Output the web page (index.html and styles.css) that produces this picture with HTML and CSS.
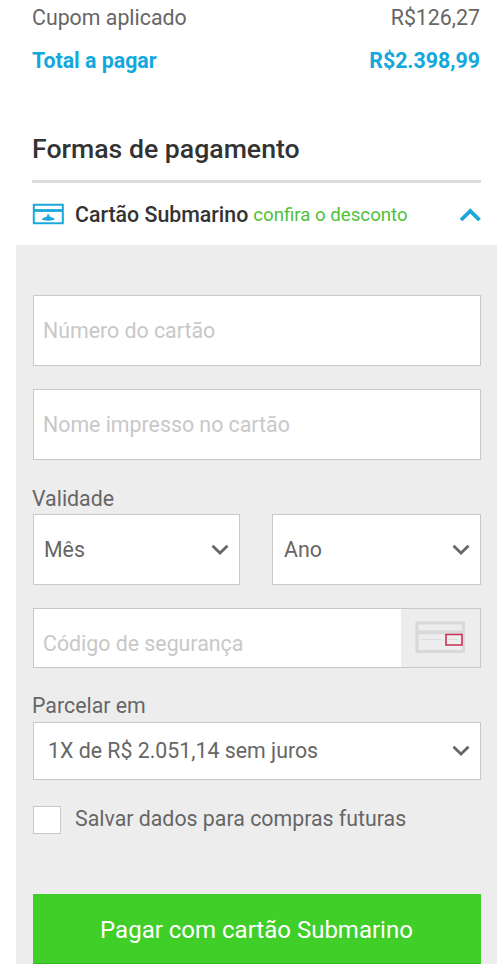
FILE: index.html
```html
<!DOCTYPE html>
<html lang="pt-BR">
<head>
<meta charset="utf-8">
<title>Formas de pagamento</title>
<link rel="stylesheet" href="styles.css">
</head>
<body>
<main class="page">
  <section class="summary">
    <div class="row"><span class="coupon">Cupom aplicado</span><span class="coupon-value">R$126,27</span></div>
    <div class="row total"><span class="total-label">Total a pagar</span><span class="total-value">R$2.398,99</span></div>
  </section>
  <h1 class="title"><span>Formas de pagamento</span></h1>
  <div class="method">
    <svg class="brand" width="32" height="22" viewBox="0 0 32 22" fill="none" stroke="#1ba8d9" stroke-width="2">
      <path d="M1.800 1.800h29v18.400h-29z"/><path d="M1.500 7.500h29.500" stroke-width="2.8"/>
      <path d="M10 16.600c0-1.300 1.800-2.100 4-2.300v-.800h1.200v-2.200h2v2.200h1.600v.8c2.200.2 3.800 1 3.800 2.300-1.200 1.400-11.400 1.400-12.600 0z" fill="#1ba8d9" stroke="none"/>
    </svg>
    <span class="method-name">Cartão Submarino</span>
    <span class="discount">confira o desconto</span>
    <svg class="up" width="22" height="14" viewBox="0 0 22 14" fill="none" stroke="#1ba8d9" stroke-width="3.8"><path d="M2 13 11.300 4 20.500 13"/></svg>
  </div>
  <form class="panel">
    <div class="field"><span class="ph-number">Número do cartão</span></div>
    <div class="field"><span class="ph-name">Nome impresso no cartão</span></div>
    <div class="label"><span class="lb-valid">Validade</span></div>
    <div class="dates">
      <div class="select"><span class="month">Mês</span><svg class="down" width="18" height="12" viewBox="0 0 18 12"><path d="M1.500 1.800 9 9l7.500-7.200"/></svg></div>
      <div class="select"><span class="year">Ano</span><svg class="down" width="18" height="12" viewBox="0 0 18 12"><path d="M1.500 1.800 9 9l7.500-7.200"/></svg></div>
    </div>
    <div class="cvv">
      <div class="cvv-input"><span class="ph-cvv">Código de segurança</span></div>
      <div class="cvv-help">
        <svg width="50" height="33" viewBox="0 0 50 33" fill="none" stroke="#d9d9d9">
          <path d="M2 2h46.500v28.500H2z" stroke-width="3"/><path d="M1 11.300h48" stroke-width="4"/><path d="M6 18.500h20M34 18.500h8" stroke-width="1"/>
          <path d="M31 13.500h16v10.500h-16z" stroke="#cb2f52" stroke-width="1.600"/>
        </svg>
      </div>
    </div>
    <div class="label installments"><span class="lb-inst">Parcelar em</span></div>
    <div class="select plan"><span class="plan-text">1X de R$ 2.051,14 sem juros</span><svg class="down" width="18" height="12" viewBox="0 0 18 12"><path d="M1.500 1.800 9 9l7.500-7.200"/></svg></div>
    <div class="save"><span class="check"></span><span class="save-text">Salvar dados para compras futuras</span></div>
    <button class="pay" type="button"><span class="pay-text">Pagar com cartão Submarino</span></button>
  </form>
</main>
</body>
</html>
```
FILE: styles.css
```css
* { box-sizing: border-box; }
body { margin: 0; background: #fff; font-family: Roboto, "Liberation Sans", sans-serif; font-size: 21.33px; color: #666; overflow: hidden; }
.page { width: 500px; height: 964px; overflow: hidden; }
span { white-space: nowrap; }
.summary { padding: 4px 20px 0 32px; }
.row { display: flex; justify-content: space-between; height: 28px; line-height: 28px; margin-bottom: 15px; }
.total { color: #12a8de; font-weight: 700; margin: 0; }
.title { margin: 53px 19px 0 32px; height: 55px; border-bottom: 3px solid #ddd; font-size: 26.67px; line-height: 42px; font-weight: 500; color: #333; }
.method { display: flex; align-items: center; height: 62px; padding: 0 19px 0 32px; }
.brand { margin-right: 11px; }
.method-name { font-weight: 500; color: #333; margin-right: 5px; padding-top: 1px; }
.discount { color: #4fc13b; font-size: 18.67px; padding-top: 1px; }
.up { margin-left: auto; }
.panel { width: 481px; height: 719px; margin-left: 16px; padding: 50px 16px 0 17px; background: #ededed; }
.field { height: 71px; margin-bottom: 23px; border: 1px solid #c8c8c8; background: #fff; padding-left: 9px; line-height: 69px; color: #c8c8c8; }
.label { height: 31px; line-height: 31px; margin-left: -1px; }
.dates { display: grid; grid-template-columns: 207px 209px; justify-content: space-between; margin-bottom: 23px; }
.select { display: flex; align-items: center; justify-content: space-between; height: 71px; border: 1px solid #c8c8c8; background: #fff; padding: 0 10px 0 10px; }
.year { padding-left: 1px; }
.down { fill: none; stroke: #666; stroke-width: 2.8; }
.cvv { display: flex; height: 60px; border: 1px solid #c8c8c8; background: #fff; }
.cvv-input { flex: 1; padding: 6px 0 0 9px; line-height: 58px; color: #c8c8c8; }
.cvv-help { width: 79px; background: #ededed; padding: 12px 0 0 14px; }
.installments { margin-top: 23px; line-height: 30px; }
.plan { height: 58px; padding-left: 14px; }
.plan-text { padding-bottom: 2px; }
.save { display: flex; align-items: center; height: 28px; margin: 26px 0 60px; }
.save-text { padding-bottom: 4px; }
.check { width: 28px; height: 28px; border: 1px solid #c8c8c8; background: #fff; margin-right: 14px; }
.pay { display: block; width: 100%; height: 70px; padding: 2px 1px 0 0; border: 0; border-bottom: 1px solid #36b822; background: #40ce29; color: #fff; font: 24px Roboto, sans-serif; }
```
